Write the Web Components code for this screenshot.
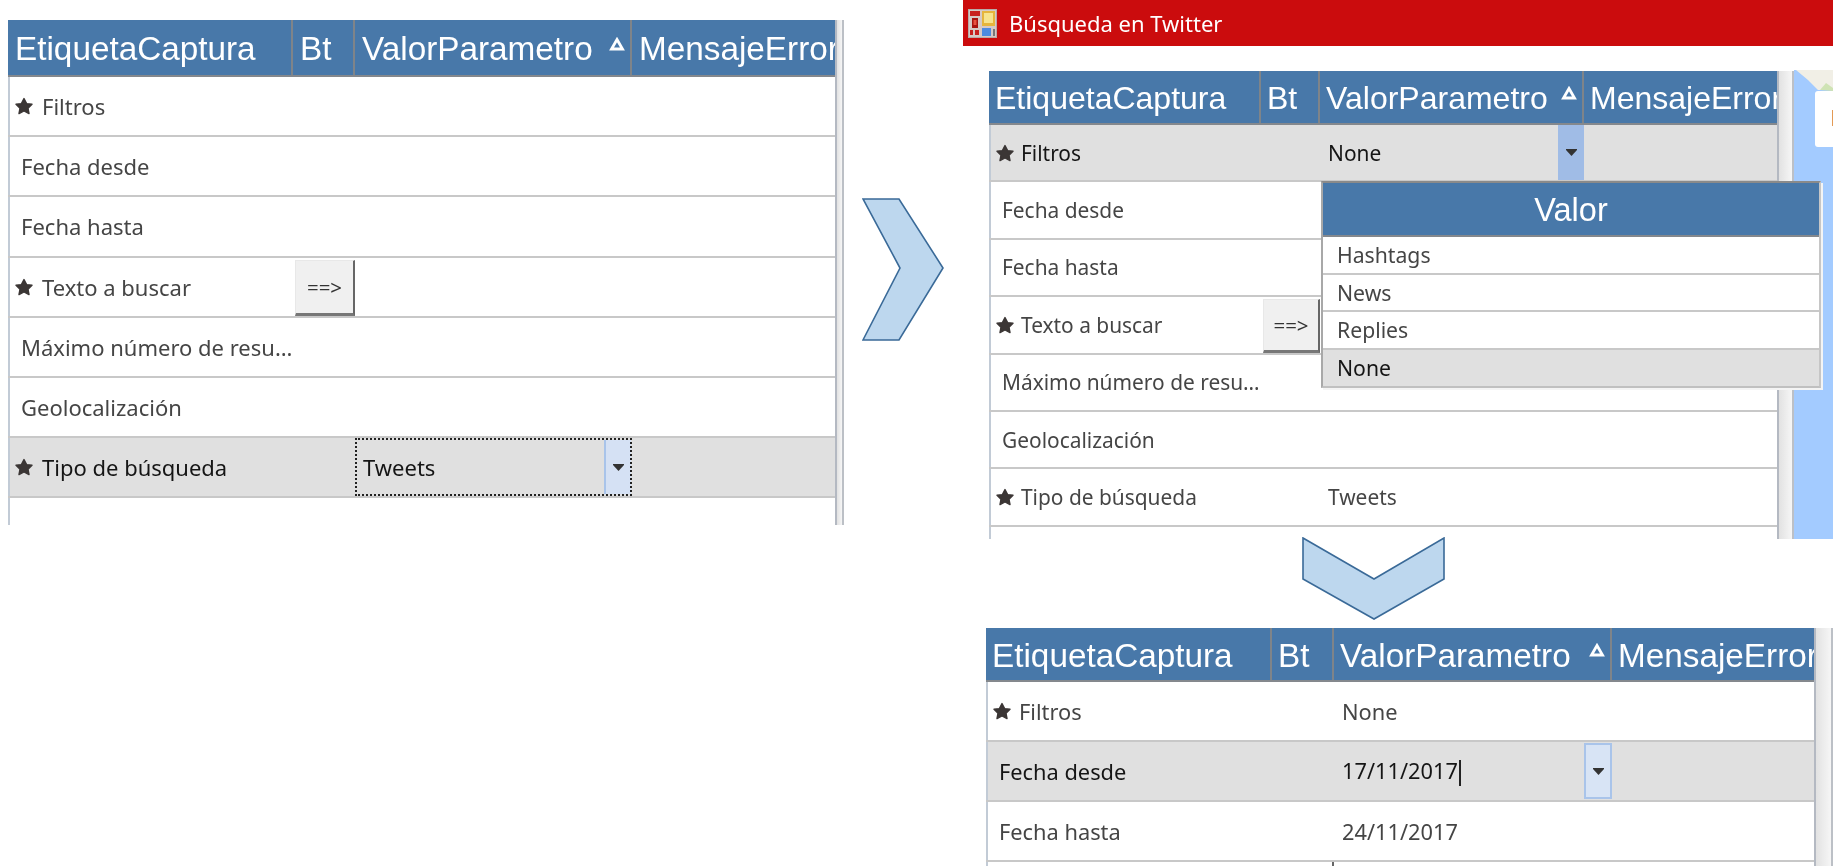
<!DOCTYPE html>
<html lang="es">
<head>
<meta charset="utf-8">
<title>Búsqueda en Twitter</title>
<style>
  html, body { margin: 0; padding: 0; background: #fff; }
  body { width: 1833px; height: 866px; overflow: hidden; position: relative; }
</style>
</head>
<body>
<title-bar style="--x:963px;--y:0px;--w:870px;--h:46px">Búsqueda en Twitter</title-bar>

<map-strip></map-strip>

<grid-panel style="--x:8px;--y:20px;--w:836px;--h:505px;--bar:9px;--head:57px;--row:60.2px;--head-size:33.3px;--head-pad:7px;--body:22px;--star-gap:8px;--cols:285px 62px 277px 1fr">
  <grid-head>
    <head-cell>EtiquetaCaptura</head-cell><head-cell>Bt</head-cell><head-cell sorted>ValorParametro</head-cell><head-cell last>MensajeError</head-cell>
  </grid-head>
  <grid-row star label="Filtros"></grid-row>
  <grid-row label="Fecha desde"></grid-row>
  <grid-row label="Fecha hasta"></grid-row>
  <grid-row star label="Texto a buscar" button="==&gt;"></grid-row>
  <grid-row label="Máximo número de resu…"></grid-row>
  <grid-row label="Geolocalización"></grid-row>
  <grid-row star active label="Tipo de búsqueda" value="Tweets" combo="focus"></grid-row>
</grid-panel>

<grid-panel style="--x:989px;--y:71px;--w:805px;--h:468px;--bar:17px;--head:54px;--row:57.4px;--head-size:32px;--head-pad:6px;--body:20.9px;--star-gap:6px;--cols:272px 59px 264px 1fr">
  <grid-head>
    <head-cell>EtiquetaCaptura</head-cell><head-cell>Bt</head-cell><head-cell sorted>ValorParametro</head-cell><head-cell last>MensajeError</head-cell>
  </grid-head>
  <grid-row star active label="Filtros" value="None" combo="open"></grid-row>
  <grid-row label="Fecha desde"></grid-row>
  <grid-row label="Fecha hasta"></grid-row>
  <grid-row star label="Texto a buscar" button="==&gt;"></grid-row>
  <grid-row label="Máximo número de resu…"></grid-row>
  <grid-row label="Geolocalización"></grid-row>
  <grid-row star label="Tipo de búsqueda" value="Tweets"></grid-row>
</grid-panel>

<value-popup style="--x:1321px;--y:181px;--w:500px">
  <popup-item>Hashtags</popup-item>
  <popup-item>News</popup-item>
  <popup-item>Replies</popup-item>
  <popup-item selected>None</popup-item>
</value-popup>

<grid-panel style="--x:986px;--y:628px;--w:847px;--h:238px;--bar:19px;--head:54px;--row:60px;--head-size:33.3px;--head-pad:6px;--body:21.8px;--star-gap:7px;--cols:286px 62px 278px 1fr">
  <grid-head>
    <head-cell>EtiquetaCaptura</head-cell><head-cell>Bt</head-cell><head-cell sorted>ValorParametro</head-cell><head-cell last>MensajeError</head-cell>
  </grid-head>
  <grid-row star label="Filtros" value="None"></grid-row>
  <grid-row active label="Fecha desde" value="17/11/2017" combo="edit"></grid-row>
  <grid-row label="Fecha hasta" value="24/11/2017"></grid-row>
  <grid-row button=""></grid-row>
</grid-panel>

<chevron-arrow style="--x:862px;--y:198px;--w:82px;--h:143px" points="1,1 37,1 81,70 37,142 1,142 38,70"></chevron-arrow>
<chevron-arrow style="--x:1302px;--y:537px;--w:143px;--h:83px" points="1,1 72,42 142,1 142,42 72,82 1,42"></chevron-arrow>

<script>
const BODY_FONT = '"Noto Sans", "Open Sans", sans-serif';

const titleTemplate = document.createElement('template');
titleTemplate.innerHTML = `
  <style>
    :host {
      position: absolute;
      left: var(--x); top: var(--y); width: var(--w); height: var(--h);
      display: flex;
      align-items: center;
      gap: 12px;
      box-sizing: border-box;
      padding: 0 0 0 5px;
      background: #cb0c0d;
      color: #fff;
      font: 22px ${BODY_FONT};
      filter: blur(.35px);
    }
    svg { width: 29px; height: 29px; flex: none; }
  </style>
  <svg viewBox="0 0 29 29">
    <rect x=".5" y=".5" width="28" height="28" fill="#d6c9c6" stroke="#b9aaa8"/>
    <rect x="2" y="2" width="10" height="5" fill="#c8201f"/>
    <rect x="4" y="9" width="6" height="10" fill="#a8120f"/>
    <rect x="5.5" y="11" width="3" height="5" fill="#e85040"/>
    <rect x="2" y="21" width="3" height="5" fill="#c8201f"/>
    <rect x="7" y="21" width="4" height="5" fill="#c8201f"/>
    <rect x="14" y="2" width="13" height="15" fill="#e6b53c"/>
    <rect x="16" y="4" width="9" height="10" fill="#f7e48e"/>
    <rect x="14" y="19" width="9" height="8" fill="#4d8be0"/>
    <rect x="25" y="20" width="2" height="7" fill="#777"/>
  </svg>
  <slot></slot>
`;

class TitleBar extends HTMLElement {
  constructor() {
    super();
    this.attachShadow({mode: 'open'});
    this.shadowRoot.appendChild(titleTemplate.content.cloneNode(true));
  }
}

const mapTemplate = document.createElement('template');
mapTemplate.innerHTML = `
  <style>
    :host {
      position: absolute;
      left: 1794px; top: 70px; width: 39px; height: 469px;
      display: block;
      background: #a3cbff;
    }
    svg { display: block; width: 100%; height: 100%; }
  </style>
  <svg viewBox="0 0 39 469">
    <polygon points="2,0 39,0 39,20 24,20 14,10" fill="#f1efe6"/>
    <polygon points="26,20 32,13 39,18 39,21" fill="#cfe3b4"/>
    <rect x="21" y="21" width="24" height="56" rx="3" fill="#fff"/>
    <rect x="38" y="40" width="2" height="16" fill="#e39a55"/>
  </svg>
`;

class MapStrip extends HTMLElement {
  constructor() {
    super();
    this.attachShadow({mode: 'open'});
    this.shadowRoot.appendChild(mapTemplate.content.cloneNode(true));
  }
}

const panelTemplate = document.createElement('template');
panelTemplate.innerHTML = `
  <style>
    :host {
      position: absolute;
      left: var(--x); top: var(--y); width: var(--w); height: var(--h);
      display: flex;
      overflow: hidden;
      background: #fff;
      font: var(--body) ${BODY_FONT};
      color: #454545;
      filter: blur(.35px);
    }
    .main {
      flex: 1;
      min-width: 0;
      display: flex;
      flex-direction: column;
      box-shadow: inset 2px 0 0 #c2cbd6;
    }
    .bar {
      flex: none;
      width: var(--bar);
      box-sizing: border-box;
      border-left: 2px solid #b4b9c2;
      border-right: 2px solid #bcc0c6;
      background: linear-gradient(90deg, #e2e2e2, #f6f6f6);
    }
  </style>
  <div class="main"><slot></slot></div>
  <div class="bar"></div>
`;

class GridPanel extends HTMLElement {
  constructor() {
    super();
    this.attachShadow({mode: 'open'});
    this.shadowRoot.appendChild(panelTemplate.content.cloneNode(true));
  }
}

const headTemplate = document.createElement('template');
headTemplate.innerHTML = `
  <style>
    :host {
      display: grid;
      grid-template-columns: var(--cols);
      height: var(--head);
      flex: none;
      box-sizing: border-box;
      border-bottom: 2px solid #84888d;
      background: #4878a9;
    }
  </style>
  <slot></slot>
`;

class GridHead extends HTMLElement {
  constructor() {
    super();
    this.attachShadow({mode: 'open'});
    this.shadowRoot.appendChild(headTemplate.content.cloneNode(true));
  }
}

const headCellTemplate = document.createElement('template');
headCellTemplate.innerHTML = `
  <style>
    :host {
      display: flex;
      align-items: center;
      min-width: 0;
      overflow: hidden;
      box-sizing: border-box;
      padding: 3px 0 0 var(--head-pad);
      border-right: 2px solid #7f8489;
      color: #fff;
      font: var(--head-size) "Liberation Sans", Arial, sans-serif;
      white-space: nowrap;
    }
    :host([last]) { border-right: 0; }
    svg { display: none; flex: none; width: 16px; height: 14px; margin: 0 5px 11px auto; }
    :host([sorted]) svg { display: block; }
  </style>
  <slot></slot>
  <svg viewBox="0 0 16 14"><polygon points="8,2.5 13.5,12 2.5,12" fill="none" stroke="#fff" stroke-width="2.8"/></svg>
`;

class HeadCell extends HTMLElement {
  constructor() {
    super();
    this.attachShadow({mode: 'open'});
    this.shadowRoot.appendChild(headCellTemplate.content.cloneNode(true));
  }
}

const rowTemplate = document.createElement('template');
rowTemplate.innerHTML = `
  <style>
    :host {
      display: grid;
      grid-template-columns: var(--cols);
      height: var(--row);
      flex: none;
      box-sizing: border-box;
      border-bottom: 2px solid #c8c8c8;
      background: #fff;
      box-shadow: inset 2px 0 0 #c2cbd6;
      white-space: nowrap;
    }
    :host([active]) { background: #e0e0e0; color: #151515; }
    .label { display: flex; align-items: center; padding-left: 13px; }
    .label.has-star { padding-left: 6px; }
    .star { width: 20px; height: 20px; margin-right: var(--star-gap); flex: none; }
    .bt { display: flex; min-width: 0; }
    .btn {
      flex: 1;
      display: flex;
      align-items: center;
      justify-content: center;
      box-sizing: border-box;
      margin: 2px 0 0 2px;
      border-top: 1px solid #e8e8e8;
      border-left: 1px solid #e8e8e8;
      border-right: 2px solid #666;
      border-bottom: 3px solid #777;
      background: #f0f0f0;
      color: #333;
      font-size: 20.5px;
    }
    .btn:empty { margin-top: 0; background: #fff; border-top: 0; border-left: 0; }
    .val { display: flex; align-items: center; min-width: 0; padding-left: 8px; }
    .val span { flex: 1; min-width: 0; }
    .caret { display: inline-block; width: 2px; height: 26px; margin-left: 1px; background: #222; vertical-align: middle; }
    .drop {
      align-self: stretch;
      width: 27px;
      flex: none;
      display: flex;
      align-items: center;
      justify-content: center;
      box-sizing: border-box;
    }
    .drop svg { width: 11px; height: 7px; }
    .val.open .drop { background: #a0bce6; width: 26px; }
    .val.focus { outline: 2px dotted #222; outline-offset: -2px; }
    .val.focus .drop { background: #d5e1f4; border-left: 2px solid #a9c4ea; margin: 2px 1px 2px 0; }
    .val.edit .drop { background: #d8e4f5; border: 2px solid #a9c4ea; width: 28px; margin: 1px 0; }
  </style>
  <div class="label"></div>
  <div class="bt"></div>
  <div class="val"></div>
  <div></div>
`;

const STAR = `<svg class="star" viewBox="0 0 20 20"><polygon points="10,2.5 12.6,7.6 18,8.3 14,12.2 15,17.6 10,15 5,17.6 6,12.2 2,8.3 7.4,7.6" fill="#3b3635" stroke="#3b3635" stroke-width="1.4" stroke-linejoin="round"/></svg>`;
const DROP = `<div class="drop"><svg viewBox="0 0 11 7"><polygon points="0,0 11,0 11,1 5.5,7 0,1" fill="#333"/></svg></div>`;

class GridRow extends HTMLElement {
  constructor() {
    super();
    this.attachShadow({mode: 'open'});
    this.shadowRoot.appendChild(rowTemplate.content.cloneNode(true));
  }

  connectedCallback() {
    const root = this.shadowRoot;
    const label = root.querySelector('.label');
    const val = root.querySelector('.val');
    const combo = this.getAttribute('combo');

    if (this.hasAttribute('star')) {
      label.classList.add('has-star');
      label.insertAdjacentHTML('beforeend', STAR);
    }
    if (this.hasAttribute('label')) {
      const text = document.createElement('span');
      text.textContent = this.getAttribute('label');
      label.appendChild(text);
    }
    if (this.hasAttribute('button')) {
      const btn = document.createElement('div');
      btn.className = 'btn';
      btn.textContent = this.getAttribute('button');
      root.querySelector('.bt').appendChild(btn);
    }
    if (this.hasAttribute('value')) {
      const text = document.createElement('span');
      text.textContent = this.getAttribute('value');
      val.appendChild(text);
      if (combo === 'edit') text.insertAdjacentHTML('beforeend', '<i class="caret"></i>');
    }
    if (combo) {
      val.classList.add(combo);
      val.insertAdjacentHTML('beforeend', DROP);
    }
  }
}

const popupTemplate = document.createElement('template');
popupTemplate.innerHTML = `
  <style>
    :host {
      position: absolute;
      left: var(--x); top: var(--y); width: var(--w);
      display: block;
      box-sizing: border-box;
      border-top: 2px solid #8a8a8a;
      border-left: 2px solid #a8a8a8;
      border-right: 2px solid #c6c6c6;
      border-bottom: 2px solid #c0c0c0;
      box-shadow: 2px 2px 0 #f4f4f4;
      background: #fff;
      font: 21.2px ${BODY_FONT};
      color: #454545;
      filter: blur(.35px);
    }
    .title {
      height: 54px;
      display: flex;
      align-items: center;
      justify-content: center;
      box-sizing: border-box;
      padding-top: 3px;
      border-bottom: 2px solid #84888d;
      background: #4878a9;
      color: #fff;
      font: 32.5px "Liberation Sans", Arial, sans-serif;
    }
  </style>
  <div class="title">Valor</div>
  <slot></slot>
`;

class ValuePopup extends HTMLElement {
  constructor() {
    super();
    this.attachShadow({mode: 'open'});
    this.shadowRoot.appendChild(popupTemplate.content.cloneNode(true));
  }
}

const itemTemplate = document.createElement('template');
itemTemplate.innerHTML = `
  <style>
    :host {
      display: flex;
      align-items: center;
      height: 37.5px;
      box-sizing: border-box;
      padding-left: 14px;
      border-bottom: 2px solid #c8c8c8;
    }
    :host(:last-child) { border-bottom: 0; height: 36px; }
    :host([selected]) { background: #e0e0e0; color: #151515; }
  </style>
  <slot></slot>
`;

class PopupItem extends HTMLElement {
  constructor() {
    super();
    this.attachShadow({mode: 'open'});
    this.shadowRoot.appendChild(itemTemplate.content.cloneNode(true));
  }
}

const arrowTemplate = document.createElement('template');
arrowTemplate.innerHTML = `
  <style>
    :host {
      position: absolute;
      left: var(--x); top: var(--y); width: var(--w); height: var(--h);
      display: block;
    }
    svg { display: block; width: 100%; height: 100%; }
    polygon { fill: #bdd7ee; stroke: #3a6a98; stroke-width: 1.6; }
  </style>
  <svg><polygon></polygon></svg>
`;

class ChevronArrow extends HTMLElement {
  constructor() {
    super();
    this.attachShadow({mode: 'open'});
    this.shadowRoot.appendChild(arrowTemplate.content.cloneNode(true));
    this.shadowRoot.querySelector('polygon').setAttribute('points', this.getAttribute('points'));
  }
}

customElements.define('title-bar', TitleBar);
customElements.define('map-strip', MapStrip);
customElements.define('grid-panel', GridPanel);
customElements.define('grid-head', GridHead);
customElements.define('head-cell', HeadCell);
customElements.define('grid-row', GridRow);
customElements.define('value-popup', ValuePopup);
customElements.define('popup-item', PopupItem);
customElements.define('chevron-arrow', ChevronArrow);
</script>
</body>
</html>
